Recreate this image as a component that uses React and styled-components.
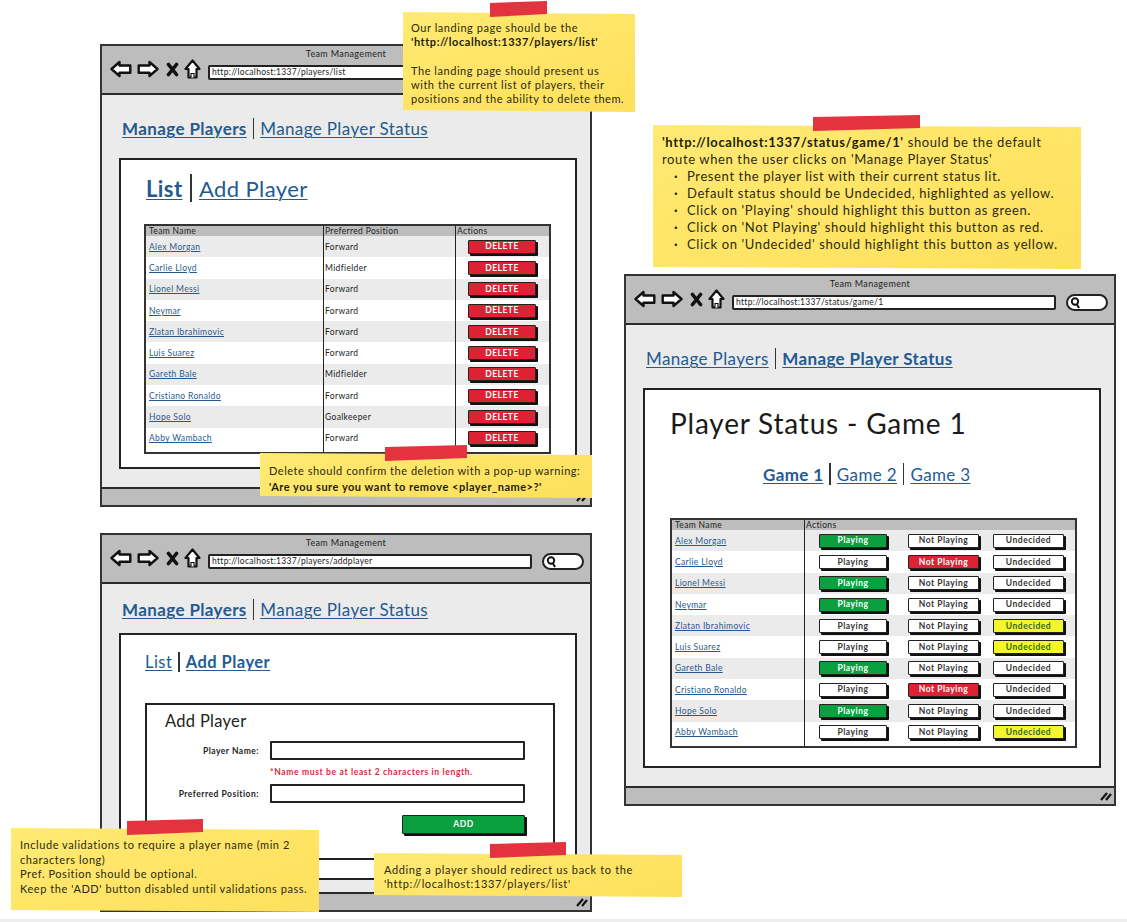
import React from 'react'
import styled, { createGlobalStyle } from 'styled-components'

const GlobalStyle = createGlobalStyle`
  html, body { margin: 0; padding: 0; background: #fff; }
  * { box-sizing: border-box; }
  body { font-family: Lato, "Noto Sans", sans-serif; color: #222; }
`

const Desktop = styled.div`
  position: relative;
  width: 1127px;
  height: 922px;
  overflow: hidden;
  background: #fff;
`

const BottomEdge = styled.div`
  position: absolute;
  left: 0;
  right: 0;
  bottom: 0;
  height: 3px;
  background: #eeeeee;
`

/* browser window chrome */
const Window = styled.section`
  position: absolute;
  left: ${p => p.$x}px;
  top: ${p => p.$y}px;
  width: 492px;
  height: ${p => p.$h}px;
  display: flex;
  flex-direction: column;
  border: 2px solid #333;
  background: #ebebeb;
`
const TitleBar = styled.header`
  height: 49px;
  flex: none;
  background: #bdbdbd;
  border-bottom: 2px solid #2a2a2a;
  padding: 2px 6px 0 8px;
`
const WindowTitle = styled.div`
  text-align: center;
  font-size: 9px;
  line-height: 11px;
  letter-spacing: 0.35px;
  padding-right: 2px;
`
const Toolbar = styled.div`
  display: flex;
  align-items: center;
  margin-top: 5px;
`
const NavIcons = styled.div`
  display: flex;
  align-items: center;
  width: 98px;
  flex: none;
  gap: 5px;
  margin-top: -7px;
`
const UrlBox = styled.div`
  width: 324px;
  height: 15px;
  flex: none;
  background: #fff;
  border: 2px solid #222;
  border-radius: 2px;
  font-size: 8.5px;
  line-height: 11px;
  letter-spacing: 0.3px;
  padding-left: 2px;
  white-space: nowrap;
  overflow: hidden;
`
const SearchPill = styled.div`
  width: 42px;
  height: 17px;
  margin-left: 10px;
  flex: none;
  background: #fff;
  border: 2px solid #222;
  border-radius: 9px;
  display: flex;
  align-items: center;
  padding-left: 2px;
`
const WindowBody = styled.div`
  flex: 1;
  min-height: 0;
  display: flex;
  flex-direction: column;
  padding: 0 13px ${p => p.$bottom}px 17px;
`
const StatusBar = styled.footer`
  height: 18px;
  flex: none;
  background: #bdbdbd;
  border-top: 2px solid #2a2a2a;
  display: flex;
  justify-content: flex-end;
  align-items: center;
  padding-right: 2px;
`

/* links */
const LinkRow = styled.nav`
  display: flex;
  align-items: center;
  flex: none;
  height: ${p => p.$height}px;
  padding-top: ${p => p.$top || 0}px;
  padding-bottom: ${p => p.$bottom || 0}px;
  margin-left: ${p => p.$indent || 0}px;
  font-size: ${p => p.$size}px;
  letter-spacing: ${p => p.$spacing || 0.3}px;
`
const PageLink = styled.a`
  color: #255a91;
  font-weight: ${p => (p.$active ? 700 : 400)};
  text-decoration: underline;
  text-decoration-thickness: 1px;
  text-underline-offset: 2px;
  white-space: nowrap;
`
const Divider = styled.span`
  width: 1.5px;
  height: 1.25em;
  margin: 0 ${p => p.$right || 6}px 0 ${p => p.$left || 6}px;
  flex: none;
  background: #333;
`

const Panel = styled.div`
  flex: 1;
  min-height: 0;
  display: flex;
  flex-direction: column;
  background: #fff;
  border: 2px solid #222;
  padding-left: ${p => p.$left || 23}px;
`

/* tables */
const DataTable = styled.table`
  width: 407px;
  flex: none;
  border: 2px solid #333;
  border-collapse: separate;
  border-spacing: 0;
  table-layout: fixed;
  background: #fff;
  font-size: 8.5px;
  letter-spacing: 0.35px;
`
const HeadCell = styled.th`
  height: 10px;
  padding: 0 0 0 ${p => (p.$first ? 3 : 1)}px;
  background: #bdbdbd;
  font-weight: 400;
  text-align: left;
  line-height: 10px;
  border-left: ${p => (p.$first ? 'none' : '1.5px solid #222')};
`
const Row = styled.tr`
  background: ${p => (p.$shade ? '#ebebeb' : '#fff')};
`
const Cell = styled.td`
  height: ${p => p.$h || 21.3}px;
  padding: 0 0 0 ${p => (p.$first ? 3 : 1)}px;
  white-space: nowrap;
  border-left: ${p => (p.$first ? 'none' : '1.5px solid #222')};
`
const PlayerLink = styled.a`
  color: #255a91;
  text-decoration: underline;
  text-underline-offset: 1px;
`
const ActionCell = styled.div`
  display: flex;
  padding-left: ${p => p.$pad}px;
  align-items: center;
`
const Btn = styled.button`
  width: ${p => p.$w}px;
  height: ${p => p.$h || 14}px;
  padding: 0;
  margin: 0 ${p => p.$after || 0}px 0 0;
  border: 1.5px solid #222;
  border-radius: 1px;
  box-shadow: 2px 2px 0 #111;
  font-family: inherit;
  font-size: 8.5px;
  font-weight: 700;
  letter-spacing: 0.5px;
  line-height: 1;
  color: ${p => ({ red: '#fff', green: '#fff', yellow: '#2e6a1d', white: '#333' }[p.$tone])};
  background: ${p => ({ red: '#dc2233', green: '#0a9f3f', yellow: '#f5f52e', white: '#fff' }[p.$tone])};
`

/* add player form */
const FormBox = styled.div`
  width: 410px;
  height: 157px;
  margin-left: 1px;
  flex: none;
  border: 2px solid #222;
  background: #fff;
`
const FormHeading = styled.h2`
  margin: 0;
  height: 36px;
  padding: 5px 0 0 18px;
  font-size: 16.5px;
  line-height: 22px;
  font-weight: 400;
  letter-spacing: 0.3px;
`
const FormGrid = styled.div`
  display: grid;
  grid-template-columns: 112px 255px;
  grid-template-rows: 19px 24px 19px 12px 19px;
  column-gap: 11px;
  align-items: center;
`
const FieldLabel = styled.label`
  text-align: right;
  font-size: 8.5px;
  font-weight: 700;
  letter-spacing: 0.5px;
`
const TextField = styled.div`
  height: 19px;
  background: #fff;
  border: 2px solid #222;
  border-radius: 1px;
`
const ErrorText = styled.div`
  grid-column: 2;
  font-size: 8.5px;
  font-weight: 700;
  letter-spacing: 0.65px;
  color: #d8293a;
`
const AddCell = styled.div`
  grid-column: 2;
  grid-row: 5;
  display: flex;
  justify-content: flex-end;
`

const PageTitle = styled.h1`
  margin: 0;
  height: 66px;
  flex: none;
  display: flex;
  align-items: center;
  font-size: 28px;
  font-weight: 400;
  letter-spacing: 0.8px;
  color: #1a1a1a;
`

/* sticky notes */
const Note = styled.aside`
  position: absolute;
  left: ${p => p.$x}px;
  top: ${p => p.$y}px;
  width: ${p => p.$w}px;
  height: ${p => p.$h}px;
  padding: ${p => p.$pad};
  font-size: ${p => p.$size}px;
  line-height: ${p => p.$line}px;
  letter-spacing: ${p => p.$spacing}px;
  color: #2b2a12;
  background: linear-gradient(160deg, #ffea74 0%, #ffe465 55%, #fde05c 100%);
  clip-path: polygon(0 0, 100% 2px, 100% 100%, 0 calc(100% - 2px));
  white-space: nowrap;
`
const Tape = styled.div`
  position: absolute;
  left: ${p => p.$x}px;
  top: ${p => p.$y}px;
  width: ${p => p.$w}px;
  height: 16px;
  background: #e2333f;
  clip-path: polygon(0 12%, 100% 0, 100% 82%, 0 100%);
`
const Strong = styled.b`
  font-weight: 700;
  color: #1f1e0c;
`
const BulletList = styled.ul`
  margin: 0;
  padding: 0 0 0 25px;
  list-style: none;
`
const Bullet = styled.li`
  position: relative;
  &::before {
    content: '·';
    position: absolute;
    left: -13px;
    font-weight: 700;
  }
`

const BackIcon = () => (
  <svg width="22" height="18" viewBox="0 0 22 18">
    <path d="M1.5 9 9.5 2v3.5h10.8v7.2H9.5V16z" fill="#fff" stroke="#111" strokeWidth="2.4" strokeLinejoin="round" />
  </svg>
)
const ForwardIcon = () => (
  <svg width="22" height="18" viewBox="0 0 22 18">
    <path d="M20.5 9 12.5 2v3.5H1.7v7.2h10.8V16z" fill="#fff" stroke="#111" strokeWidth="2.4" strokeLinejoin="round" />
  </svg>
)
const StopIcon = () => (
  <svg width="13" height="15" viewBox="0 0 13 15" style={{ marginLeft: 2 }}>
    <path d="M2.5 2.5 10.5 12.5M10.5 2.5 2.5 12.5" stroke="#111" strokeWidth="3.6" strokeLinecap="round" />
  </svg>
)
const HomeIcon = () => (
  <svg width="17" height="20" viewBox="0 0 17 20">
    <path d="M8.5 1.5 1.5 10h3v8.5h8V10h3z" fill="#fff" stroke="#111" strokeWidth="2.2" strokeLinejoin="round" />
    <path d="M7 18.5v-4h3v4" fill="#fff" stroke="#111" strokeWidth="1.2" />
  </svg>
)
const SearchIcon = () => (
  <svg width="11" height="13" viewBox="0 0 11 13">
    <circle cx="5" cy="5.5" r="3.2" fill="none" stroke="#111" strokeWidth="1.9" />
    <path d="M7 8.5 9 12" stroke="#111" strokeWidth="2" />
  </svg>
)
const GripIcon = () => (
  <svg width="12" height="10" viewBox="0 0 12 10">
    <path d="M1 9 7 2M6 9l5-6" stroke="#111" strokeWidth="2.2" />
  </svg>
)

const Browser = ({ x, y, h, url, bodyBottom = 18, children }) => (
  <Window $x={x} $y={y} $h={h}>
    <TitleBar>
      <WindowTitle>Team Management</WindowTitle>
      <Toolbar>
        <NavIcons>
          <BackIcon />
          <ForwardIcon />
          <StopIcon />
          <HomeIcon />
        </NavIcons>
        <UrlBox>{url}</UrlBox>
        <SearchPill>
          <SearchIcon />
        </SearchPill>
      </Toolbar>
    </TitleBar>
    <WindowBody $bottom={bodyBottom}>{children}</WindowBody>
    <StatusBar>
      <GripIcon />
    </StatusBar>
  </Window>
)

const MainNav = ({ active, height = 63, top = 4 }) => (
  <LinkRow $height={height} $top={top} $size={17} $spacing={0.38} $indent={3}>
    <PageLink $active={active === 0}>Manage Players</PageLink>
    <Divider />
    <PageLink $active={active === 1}>Manage Player Status</PageLink>
  </LinkRow>
)

const players = [
  ['Alex Morgan', 'Forward', 'P'],
  ['Carlie Lloyd', 'Midfielder', 'N'],
  ['Lionel Messi', 'Forward', 'P'],
  ['Neymar', 'Forward', 'P'],
  ['Zlatan Ibrahimovic', 'Forward', 'U'],
  ['Luis Suarez', 'Forward', 'U'],
  ['Gareth Bale', 'Midfielder', 'P'],
  ['Cristiano Ronaldo', 'Forward', 'N'],
  ['Hope Solo', 'Goalkeeper', 'P'],
  ['Abby Wambach', 'Forward', 'U'],
]

const ListWindow = () => (
  <Browser x={100} y={44} h={463} url="http://localhost:1337/players/list">
    <MainNav active={0} />
    <Panel>
      <LinkRow $height={64} $bottom={8} $size={22} $spacing={0.4} $indent={2}>
        <PageLink $active>List</PageLink>
        <Divider $left={8} $right={7} />
        <PageLink>Add Player</PageLink>
      </LinkRow>
      <DataTable>
        <colgroup>
          <col style={{ width: 177 }} />
          <col style={{ width: 132 }} />
          <col />
        </colgroup>
        <thead>
          <tr>
            <HeadCell $first>Team Name</HeadCell>
            <HeadCell>Preferred Position</HeadCell>
            <HeadCell>Actions</HeadCell>
          </tr>
        </thead>
        <tbody>
          {players.map(([name, position], i) => (
            <Row key={name} $shade={i % 2 === 0}>
              <Cell $first>
                <PlayerLink>{name}</PlayerLink>
              </Cell>
              <Cell>{position}</Cell>
              <Cell>
                <ActionCell $pad={11}>
                  <Btn $w={68} $tone="red">DELETE</Btn>
                </ActionCell>
              </Cell>
            </Row>
          ))}
          <Row>
            <Cell $first $h={3} />
            <Cell $h={3} />
            <Cell $h={3} />
          </Row>
        </tbody>
      </DataTable>
    </Panel>
  </Browser>
)

const AddWindow = () => (
  <Browser x={100} y={533} h={379} bodyBottom={12} url="http://localhost:1337/players/addplayer">
    <MainNav active={0} height={49} top={2} />
    <Panel>
      <LinkRow $height={68} $bottom={14} $size={16.5} $spacing={0.45} $indent={1}>
        <PageLink>List</PageLink>
        <Divider />
        <PageLink $active>Add Player</PageLink>
      </LinkRow>
      <FormBox>
        <FormHeading>Add Player</FormHeading>
        <FormGrid>
          <FieldLabel>Player Name:</FieldLabel>
          <TextField />
          <ErrorText>*Name must be at least 2 characters in length.</ErrorText>
          <FieldLabel>Preferred Position:</FieldLabel>
          <TextField />
          <AddCell>
            <Btn $w={123} $h={19} $tone="green">ADD</Btn>
          </AddCell>
        </FormGrid>
      </FormBox>
    </Panel>
  </Browser>
)

const StatusWindow = () => (
  <Browser x={624} y={274} h={532} url="http://localhost:1337/status/game/1">
    <MainNav active={1} />
    <Panel $left={25}>
      <PageTitle>Player Status - Game 1</PageTitle>
      <LinkRow $height={62} $bottom={26} $size={17} $spacing={0.35} $indent={93}>
        <PageLink $active>Game 1</PageLink>
        <Divider />
        <PageLink>Game 2</PageLink>
        <Divider />
        <PageLink>Game 3</PageLink>
      </LinkRow>
      <DataTable>
        <colgroup>
          <col style={{ width: 132 }} />
          <col />
        </colgroup>
        <thead>
          <tr>
            <HeadCell $first>Team Name</HeadCell>
            <HeadCell>Actions</HeadCell>
          </tr>
        </thead>
        <tbody>
          {players.map(([name, , status], i) => (
            <Row key={name} $shade={i % 2 === 0}>
              <Cell $first>
                <PlayerLink>{name}</PlayerLink>
              </Cell>
              <Cell>
                <ActionCell $pad={13}>
                  <Btn $w={68} $after={21} $tone={status === 'P' ? 'green' : 'white'}>Playing</Btn>
                  <Btn $w={71} $after={14} $tone={status === 'N' ? 'red' : 'white'}>Not Playing</Btn>
                  <Btn $w={71} $tone={status === 'U' ? 'yellow' : 'white'}>Undecided</Btn>
                </ActionCell>
              </Cell>
            </Row>
          ))}
          <Row>
            <Cell $first $h={3} />
            <Cell $h={3} />
          </Row>
        </tbody>
      </DataTable>
    </Panel>
  </Browser>
)

export default function App() {
  return (
    <Desktop>
      <GlobalStyle />
      <ListWindow />
      <AddWindow />
      <StatusWindow />

      <Note $x={403} $y={12} $w={232} $h={100} $pad="9px 0 0 8px" $size={11} $line={14.3} $spacing={0.55}>
        Our landing page should be the<br />
        <Strong>'http://localhost:1337/players/list'</Strong><br />
        <br />
        The landing page should present us<br />
        with the current list of players, their<br />
        positions and the ability to delete them.
      </Note>
      <Tape $x={490} $y={1} $w={57} />

      <Note $x={260} $y={453} $w={332} $h={45} $pad="10px 0 0 9px" $size={11} $line={15.5} $spacing={0.52}>
        Delete should confirm the deletion with a pop-up warning:<br />
        <Strong>'Are you sure you want to remove &lt;player_name&gt;?'</Strong>
      </Note>
      <Tape $x={385} $y={445} $w={82} />

      <Note $x={653} $y={125} $w={428} $h={144} $pad="9px 0 0 9px" $size={13} $line={17} $spacing={0.62}>
        <Strong>'http://localhost:1337/status/game/1'</Strong> should be the default<br />
        route when the user clicks on 'Manage Player Status'
        <BulletList>
          <Bullet>Present the player list with their current status lit.</Bullet>
          <Bullet>Default status should be Undecided, highlighted as yellow.</Bullet>
          <Bullet>Click on 'Playing' should highlight this button as green.</Bullet>
          <Bullet>Click on 'Not Playing' should highlight this button as red.</Bullet>
          <Bullet>Click on 'Undecided' should highlight this button as yellow.</Bullet>
        </BulletList>
      </Note>
      <Tape $x={813} $y={115} $w={107} />

      <Note $x={11} $y={828} $w={308} $h={84} $pad="10px 0 0 9px" $size={11} $line={14.6} $spacing={0.56}>
        Include validations to require a player name (min 2<br />
        characters long)<br />
        Pref. Position should be optional.<br />
        Keep the 'ADD' button disabled until validations pass.
      </Note>
      <Tape $x={127} $y={819} $w={76} />

      <Note $x={374} $y={853} $w={308} $h={44} $pad="10px 0 0 10px" $size={11} $line={14} $spacing={0.63}>
        Adding a player should redirect us back to the<br />
        'http://localhost:1337/players/list'
      </Note>
      <Tape $x={490} $y={842} $w={76} />
      <BottomEdge />
    </Desktop>
  )
}
